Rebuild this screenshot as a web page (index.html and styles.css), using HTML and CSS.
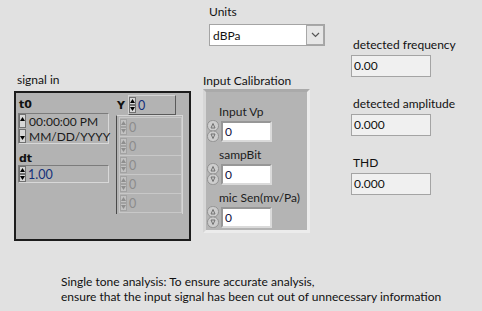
FILE: index.html
```html
<!DOCTYPE html>
<html lang="en">

<head>
    <meta charset="UTF-8">
    <title>Single tone analysis</title>
    <link rel="stylesheet" href="styles.css">
</head>

<body>
    <svg class="defs" width="0" height="0">
        <symbol id="spin" viewBox="0 0 7 16">
            <rect x="0.5" y="0.5" width="6" height="7" fill="#d6d6d6" stroke="#707070" />
            <rect x="0.5" y="8.5" width="6" height="7" fill="#d6d6d6" stroke="#707070" />
            <path d="M3.5 2 L6 6 L1 6 Z" fill="#000" />
            <path d="M1 10 L6 10 L3.5 14 Z" fill="#000" />
        </symbol>
        <symbol id="spin-off" viewBox="0 0 7 16">
            <rect x="0.5" y="0.5" width="6" height="7" fill="#c2c2c2" stroke="#a2a2a2" />
            <rect x="0.5" y="8.5" width="6" height="7" fill="#c2c2c2" stroke="#a2a2a2" />
            <path d="M3.5 2 L6 6 L1 6 Z" fill="#8e8e8e" />
            <path d="M1 10 L6 10 L3.5 14 Z" fill="#8e8e8e" />
        </symbol>
        <symbol id="spin-tall" viewBox="0 0 7 29">
            <rect x="0.5" y="0.5" width="6" height="13" fill="#d6d6d6" stroke="#707070" />
            <rect x="0.5" y="15.5" width="6" height="13" fill="#d6d6d6" stroke="#707070" />
            <path d="M3.5 3 L6 7 L1 7 Z" fill="#000" />
            <path d="M1 22 L6 22 L3.5 26 Z" fill="#000" />
        </symbol>
        <symbol id="mspin" viewBox="0 0 12 22">
            <rect x="0.5" y="0.5" width="11" height="10.5" rx="5" fill="#cdcdcd" stroke="#929292" />
            <rect x="0.5" y="11" width="11" height="10.5" rx="5" fill="#cdcdcd" stroke="#929292" />
            <path d="M4 8 L6 3.5 L8 8 Z" fill="none" stroke="#707070" />
            <path d="M4 14 L8 14 L6 18.5 Z" fill="none" stroke="#707070" />
        </symbol>
    </svg>

    <div class="panel">
        <div class="row">
            <div class="col-wave">
                <div class="label">signal in</div>
                <div class="wave">
                    <div class="wave-left">
                        <div class="blabel">t0</div>
                        <div class="tstamp">
                            <svg class="spin-tall"><use href="#spin-tall" /></svg>
                            <div class="tstamp-text">00:00:00 PM<br>MM/DD/YYYY</div>
                        </div>
                        <div class="blabel gap">dt</div>
                        <div class="cnum">
                            <svg class="spin"><use href="#spin" /></svg>
                            <span class="val">1.00</span>
                        </div>
                    </div>
                    <div class="wave-right">
                        <div class="yhead">
                            <div class="blabel">Y</div>
                            <div class="cnum index">
                                <svg class="spin"><use href="#spin" /></svg>
                                <span class="val">0</span>
                            </div>
                        </div>
                        <div class="array">
                            <div class="elem"><svg class="spin"><use href="#spin-off" /></svg><span>0</span></div>
                            <div class="elem"><svg class="spin"><use href="#spin-off" /></svg><span>0</span></div>
                            <div class="elem"><svg class="spin"><use href="#spin-off" /></svg><span>0</span></div>
                            <div class="elem"><svg class="spin"><use href="#spin-off" /></svg><span>0</span></div>
                            <div class="elem"><svg class="spin"><use href="#spin-off" /></svg><span>0</span></div>
                        </div>
                    </div>
                </div>
            </div>

            <div class="col-mid">
                <div class="units">
                    <div class="label">Units</div>
                    <div class="ring">
                        <span>dBPa</span>
                        <div class="ring-btn">
                            <svg width="9" height="6" viewBox="0 0 9 6">
                                <polyline points="1,1 4.5,4.5 8,1" fill="none" stroke="#555" stroke-width="1.2" />
                            </svg>
                        </div>
                    </div>
                </div>
                <div class="label">Input Calibration</div>
                <div class="calib">
                    <div class="label">Input Vp</div>
                    <div class="mnum">
                        <svg class="mspin"><use href="#mspin" /></svg>
                        <div class="mbox">0</div>
                    </div>
                    <div class="label">sampBit</div>
                    <div class="mnum">
                        <svg class="mspin"><use href="#mspin" /></svg>
                        <div class="mbox">0</div>
                    </div>
                    <div class="label">mic Sen(mv/Pa)</div>
                    <div class="mnum">
                        <svg class="mspin"><use href="#mspin" /></svg>
                        <div class="mbox">0</div>
                    </div>
                </div>
            </div>

            <div class="col-ind">
                <div class="ind">
                    <div class="label">detected frequency</div>
                    <div class="ind-box">0.00</div>
                </div>
                <div class="ind">
                    <div class="label">detected amplitude</div>
                    <div class="ind-box">0.000</div>
                </div>
                <div class="ind">
                    <div class="label">THD</div>
                    <div class="ind-box">0.000</div>
                </div>
            </div>
        </div>

        <p class="note">Single tone analysis: To ensure accurate analysis,<br>ensure that the input signal has been cut out of unnecessary information</p>
    </div>
</body>

</html>
```

FILE: styles.css
```css
body {
    margin: 0;
    background: #e1e1e1;
    font-family: Lato, "Noto Sans", sans-serif;
    font-size: 12px;
    color: #111;
}

.defs {
    position: absolute;
}

.panel {
    width: 482px;
    height: 311px;
    overflow: hidden;
}

.row {
    display: flex;
    align-items: flex-start;
    padding-left: 14px;
}

.label {
    line-height: 15px;
    white-space: nowrap;
}

/* waveform control */
.col-wave {
    width: 177px;
    padding-top: 72px;
}

.col-wave > .label {
    padding-left: 3px;
    margin-bottom: 4px;
}

.wave {
    box-sizing: border-box;
    height: 150px;
    border: 2px solid #1c1c1c;
    background: #b3b3b3;
    display: flex;
    padding: 2px 0 0 2px;
}

.wave-left {
    width: 91px;
    padding-top: 3px;
}

.blabel {
    font-family: "DejaVu Sans", sans-serif;
    font-weight: bold;
    font-size: 11px;
    line-height: 13px;
    padding-left: 1px;
}

.blabel.gap {
    margin-top: 8px;
}

.tstamp {
    box-sizing: border-box;
    height: 31px;
    margin-top: 2px;
    display: flex;
    align-items: center;
    border: 1px solid #d8d8d8;
    border-top-color: #7c7c7c;
    border-left-color: #7c7c7c;
}

.spin-tall {
    width: 7px;
    height: 29px;
    flex: none;
}

.tstamp-text {
    font-size: 12px;
    line-height: 15px;
    padding-left: 3px;
    color: #1a1a1a;
    white-space: nowrap;
}

.cnum {
    box-sizing: border-box;
    height: 18px;
    display: flex;
    align-items: center;
    border: 1px solid #d8d8d8;
    border-top-color: #7c7c7c;
    border-left-color: #7c7c7c;
}

.spin {
    width: 7px;
    height: 16px;
    flex: none;
}

.val {
    font-size: 12.5px;
    padding-left: 2px;
    color: #13307a;
}

.wave-right {
    width: 67px;
    margin-left: 7px;
}

.yhead {
    display: flex;
    align-items: center;
    height: 20px;
}

.yhead .blabel {
    width: 11px;
}

.index {
    width: 48px;
    height: 20px;
    border-color: #5a5a5a;
    border-top-color: #d4d4d4;
    border-left-color: #d4d4d4;
}

.array {
    box-sizing: border-box;
    width: 67px;
    padding: 1px 0 0 2px;
    border: 1px solid #d6d6d6;
    border-left-color: #4a4a4a;
    border-bottom: none;
    height: 99px;
}

.elem {
    box-sizing: border-box;
    width: 63px;
    height: 19px;
    display: flex;
    align-items: center;
    border: 1px solid #c8c8c8;
    border-bottom: none;
    color: #8c8c8c;
    font-size: 12.5px;
}

.elem:last-child {
    border-bottom: 1px solid #c8c8c8;
    height: 20px;
}

.elem span {
    padding-left: 2px;
}

/* middle column */
.col-mid {
    width: 122px;
    margin-left: 12px;
    padding-top: 4px;
}

.units {
    padding-left: 6px;
    margin-bottom: 27px;
}

.units .label {
    margin-bottom: 5px;
}

.ring {
    box-sizing: border-box;
    width: 116px;
    height: 22px;
    border: 1px solid #a4a4a4;
    background: #fff;
    display: flex;
    align-items: center;
    justify-content: space-between;
    padding-left: 3px;
}

.ring-btn {
    box-sizing: border-box;
    width: 18px;
    height: 20px;
    border: 1px solid #a8a8a8;
    background: #e6e6e6;
    display: flex;
    align-items: center;
    justify-content: center;
}

.calib {
    box-sizing: border-box;
    width: 107px;
    height: 144px;
    margin-top: 1px;
    background: #b4b4b4;
    border: 3px solid #ececec;
    border-top-color: #aaaaaa;
    border-left-color: #d6d6d6;
    padding: 12px 0 0 1px;
}

.calib .label {
    margin-left: 12px;
    color: #1c1c1c;
}

.mnum {
    display: flex;
    align-items: center;
    margin: 1px 0 5px;
}

.mnum:last-child {
    margin-bottom: 0;
}

.mspin {
    width: 12px;
    height: 22px;
    flex: none;
}

.mbox {
    box-sizing: border-box;
    width: 51px;
    height: 21px;
    margin-left: 2px;
    background: #fff;
    border: 2px solid #dadada;
    border-top-color: #979797;
    border-left-color: #979797;
    padding-left: 2px;
    line-height: 17px;
    color: #101040;
}

/* indicators */
.col-ind {
    margin-left: 26px;
    padding-top: 37px;
}

.ind + .ind {
    margin-top: 19px;
}

.ind .label {
    padding-left: 2px;
    margin-bottom: 3px;
}

.ind-box {
    box-sizing: border-box;
    width: 80px;
    height: 22px;
    background: #f0f0f0;
    border: 1px solid #a4a4a4;
    padding-left: 2px;
    line-height: 20px;
}

.note {
    margin: 33px 0 0 61px;
    line-height: 15px;
    white-space: nowrap;
}
```
